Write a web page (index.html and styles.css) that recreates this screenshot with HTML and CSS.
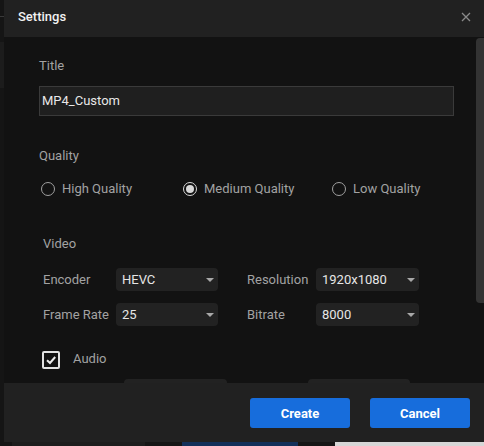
FILE: index.html
```html
<!DOCTYPE html>
<html>
<head>
<meta charset="utf-8">
<link rel="stylesheet" href="styles.css">
</head>
<body>
<div class="app">
  <div class="app-main">
    <div class="app-side"><span class="side-line"></span><span class="side-block"></span></div>
  </div>
  <div class="app-bottom">
    <div class="ab-dark"></div>
    <div class="ab-list"></div>
    <div class="ab-gap"></div>
    <div class="ab-convert">Convert All</div>
    <div class="ab-gap2"></div>
    <div class="ab-light"></div>
  </div>
</div>

<div class="dialog">
  <div class="dlg-head">
    <span class="dlg-title">Settings</span>
    <button class="close" aria-label="Close">
      <svg width="10" height="10" viewBox="0 0 10 10"><path d="M1 1 L9 9 M9 1 L1 9" stroke="#8a8a8a" stroke-width="1.3" fill="none"/></svg>
    </button>
  </div>

  <div class="dlg-body">
    <div class="label">Title</div>
    <div class="text-input">MP4_Custom</div>

    <div class="label quality-label">Quality</div>
    <div class="radios">
      <div class="radio"><span class="circle"></span><span>High Quality</span></div>
      <div class="radio"><span class="circle on"></span><span>Medium Quality</span></div>
      <div class="radio"><span class="circle"></span><span>Low Quality</span></div>
    </div>

    <div class="section">
      <div class="label">Video</div>
      <div class="grid video-grid">
        <span class="lbl">Encoder</span>
        <div class="select">HEVC<span class="caret"></span></div>
        <span class="lbl lbl2">Resolution</span>
        <div class="select">1920x1080<span class="caret"></span></div>
        <span class="lbl">Frame Rate</span>
        <div class="select">25<span class="caret"></span></div>
        <span class="lbl lbl2">Bitrate</span>
        <div class="select">8000<span class="caret"></span></div>
      </div>
    </div>

    <div class="check-row">
      <span class="checkbox">
        <svg width="14" height="14" viewBox="0 0 14 14"><path d="M3 7.2 L6 10 L11.2 4" stroke="#ececec" stroke-width="2" fill="none"/></svg>
      </span>
      <span class="check-label">Audio</span>
    </div>

    <div class="grid audio-grid">
      <span class="lbl"></span>
      <div class="select"></div>
      <span class="lbl"></span>
      <div class="select"></div>
    </div>
  </div>
  <div class="scroll-thumb"></div>

  <div class="dlg-foot">
    <button class="btn">Create</button>
    <button class="btn">Cancel</button>
  </div>
</div>
</body>
</html>
```

FILE: styles.css
```css
* { box-sizing: border-box; }
html, body { margin: 0; padding: 0; }
body {
  width: 484px;
  height: 446px;
  overflow: hidden;
  background: #181818;
  font-family: Roboto, "Liberation Sans", Arial, sans-serif;
  font-size: 13px;
  position: relative;
}

/* underlying app */
.app { display: flex; flex-direction: column; height: 446px; overflow: hidden; }
.app-main { height: 442px; flex: none; display: flex; }
.app-side { width: 4px; background: #151515; display: flex; flex-direction: column; }
.side-line { display: block; height: 1px; margin-top: 16px; background: #3a3a3a; }
.side-block { display: block; height: 46px; margin-top: 25px; background: #1c1c1c; }
.app-bottom { display: flex; height: 4px; flex: none; overflow: hidden; }
.ab-dark { width: 12px; background: #151515; }
.ab-list { width: 133px; background: #1d1d1d; }
.ab-gap { width: 37px; background: #151515; }
.ab-convert {
  width: 116px; background: #12305a; color: #9aa6b8;
  text-align: center; font-size: 14px; line-height: 22px;
}
.ab-gap2 { width: 37px; background: #151515; }
.ab-light { flex: 1; background: #d6d6d6; }

/* dialog */
.dialog {
  position: absolute;
  left: 4px; top: 0;
  width: 480px; height: 442px;
  display: flex; flex-direction: column;
  background: #121212;
}
.dlg-head {
  height: 37px; flex: none;
  background: #212121;
  display: flex; align-items: center; justify-content: space-between;
  padding: 0 11px 4px 14px;
}
.dlg-title { color: #f2f2f2; font-size: 13px; font-weight: 500; }
.close {
  background: none; border: 0; padding: 0; width: 14px; height: 14px;
  display: flex; align-items: center; justify-content: center;
}

.dlg-body {
  flex: 1;
  overflow: hidden;
  padding: 21px 8px 0 35px;
}
.scroll-thumb {
  position: absolute;
  right: 0; top: 38px;
  width: 8px; height: 265px;
  background: #333333;
  border-radius: 4px 0 0 4px;
}

.label { color: #a2a2a2; line-height: 16px; }
.text-input {
  margin-top: 12px;
  width: 415px; height: 30px;
  background: #1f1f1f;
  border: 1px solid #3a3a3a;
  color: #e8e8e8;
  padding-left: 2px;
  line-height: 28px;
}
.quality-label { margin-top: 32px; }

.radios {
  margin-top: 17px;
  display: grid;
  grid-template-columns: 142px 149px auto;
  padding-left: 2px;
  color: #a2a2a2;
  line-height: 16px;
}
.radio { display: flex; align-items: center; gap: 7px; }
.circle {
  width: 14px; height: 14px; border-radius: 50%;
  border: 1.5px solid #a0a0a0;
  display: flex; align-items: center; justify-content: center;
}
.circle.on { border-color: #d8d8d8; }
.circle.on::after {
  content: ""; width: 8px; height: 8px; border-radius: 50%; background: #d8d8d8;
}

.section { margin-top: 39px; padding-left: 4px; }
.grid {
  display: grid;
  row-gap: 12px;
  align-items: center;
}
.video-grid { margin-top: 16px; grid-template-columns: 73px 102px 98px 103px; }
.lbl { color: #a2a2a2; white-space: nowrap; }
.lbl2 { padding-left: 29px; }
.select {
  height: 23px;
  background: #222222;
  border-radius: 4px;
  color: #e6e6e6;
  padding-left: 6px;
  line-height: 23px;
  position: relative;
}
.caret {
  position: absolute; right: 4px; top: 10px;
  width: 0; height: 0;
  border-left: 4.5px solid transparent;
  border-right: 4.5px solid transparent;
  border-top: 4px solid #a8a8a8;
}

.check-row {
  margin-top: 25px;
  padding-left: 3px;
  display: flex; align-items: center; gap: 13px;
  height: 18px;
}
.checkbox {
  width: 18px; height: 18px;
  border: 2px solid #e2e2e2; border-radius: 2px;
  display: flex; align-items: center; justify-content: center;
}
.check-label { color: #a2a2a2; margin-top: -3px; }

.audio-grid {
  margin-top: 10px; padding-left: 4px;
  grid-template-columns: 81px 103px 81px 102px;
}

.dlg-foot {
  height: 59px; flex: none;
  background: #212121;
  display: flex; justify-content: flex-end; align-items: flex-start;
  gap: 20px;
  padding: 15px 14px 0 0;
}
.btn {
  width: 100px; height: 30px;
  background: #176ddc;
  border: 0; border-radius: 3px;
  color: #ffffff;
  font-family: Roboto, "Liberation Sans", Arial, sans-serif;
  font-size: 13px; font-weight: 700;
}
```
